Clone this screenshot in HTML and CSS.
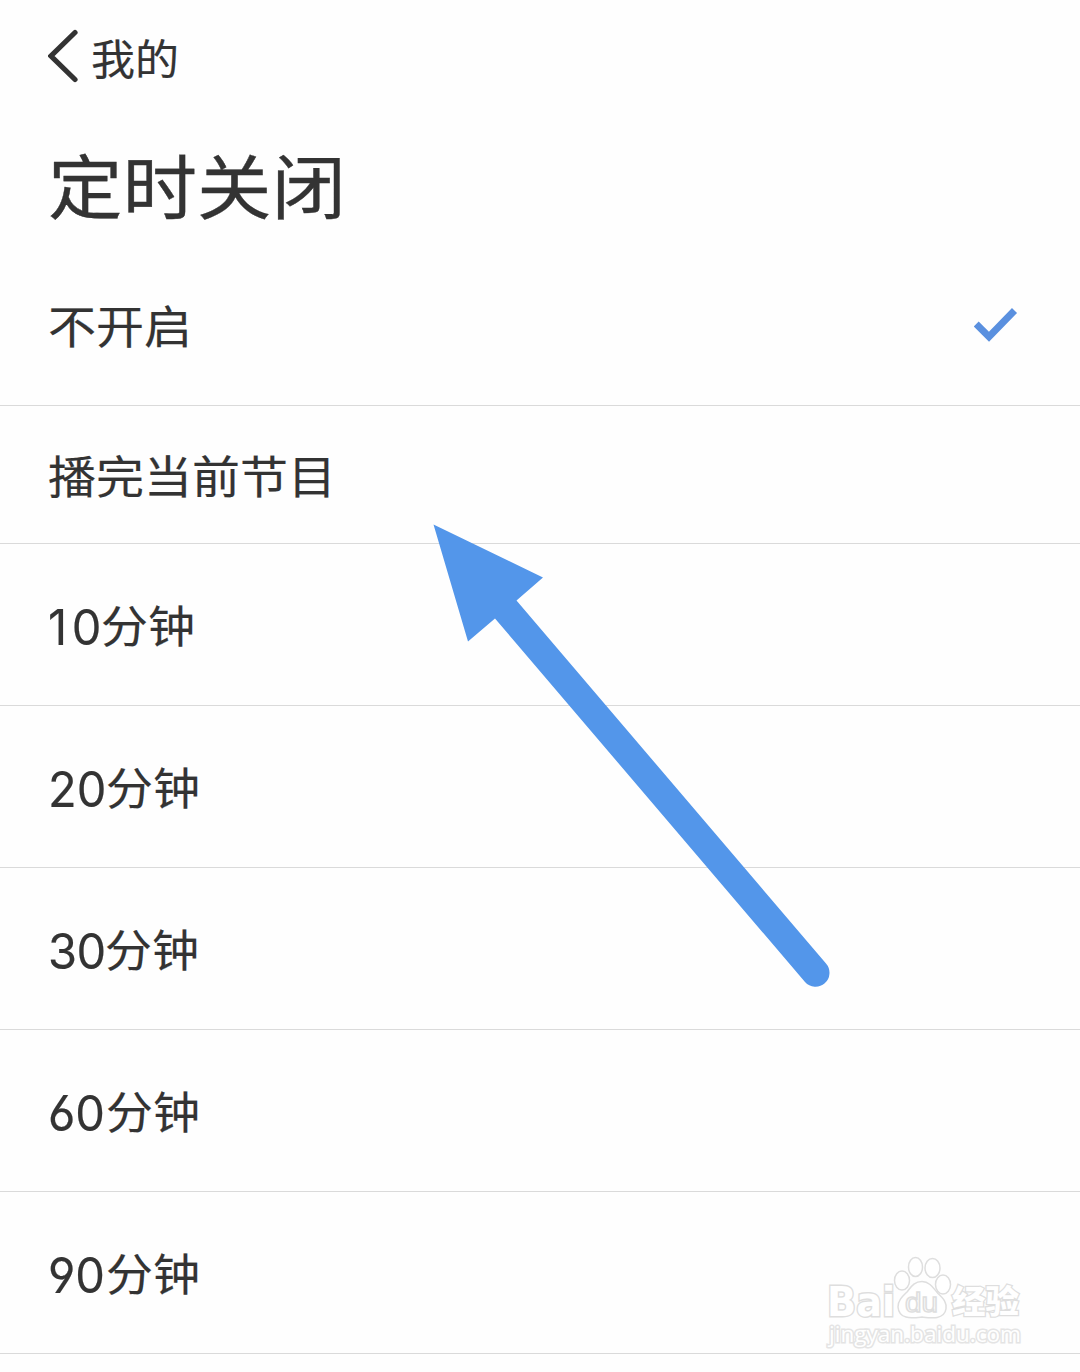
FILE: index.html
```html
<!DOCTYPE html>
<html lang="zh-CN">
<head>
<meta charset="utf-8">
<title>定时关闭</title>
<link rel="stylesheet" href="styles.css">
</head>
<body>
<main class="screen">
  <header class="header">
    <a class="back">
      <svg class="back-icon" width="30" height="54" viewBox="0 0 30 54"><path d="M27 3.500 3 27 27 50.500" fill="none" stroke="#333" stroke-width="5.200" stroke-linecap="round"/></svg>
      <span class="back-label">我的</span>
    </a>
    <h1 class="title">定时关闭</h1>
  </header>
  <ul class="options">
    <li class="option">
      <span class="label">不开启</span>
      <svg class="check" width="44" height="36" viewBox="0 0 44 36"><path d="M2.200 16 15 28.700 40.500 2.500" fill="none" stroke="#5a90df" stroke-width="7"/></svg>
    </li>
    <li class="option option-short"><span class="label">播完当前节目</span></li>
    <li class="option"><span class="label minutes"><span class="num num-ten">10</span>分钟</span></li>
    <li class="option"><span class="label minutes"><span class="num">20</span>分钟</span></li>
    <li class="option"><span class="label minutes"><span class="num num-thirty">30</span>分钟</span></li>
    <li class="option"><span class="label minutes"><span class="num">60</span>分钟</span></li>
    <li class="option"><span class="label minutes"><span class="num">90</span>分钟</span></li>
  </ul>
  <svg class="arrow" width="400" height="466" viewBox="432 523 400 466">
    <path d="M433.500 524.500 543 577.500 516.500 600.500 826 963.500A13.600 13.600 0 0 1 805 982L495 618.500 468 641.500Z" fill="#5396ea"/>
  </svg>
  <svg class="watermark" width="210" height="105" viewBox="820 1250 210 105">
    <g class="mark">
      <text class="brand" transform="translate(827 1316) scale(1.080 1)" x="0" y="0" textLength="63" lengthAdjust="spacingAndGlyphs">Bai</text>
      <ellipse cx="902" cy="1280.500" rx="7.500" ry="9.500"/>
      <ellipse cx="915.500" cy="1267" rx="7" ry="9.500"/>
      <ellipse cx="932.500" cy="1268" rx="7.500" ry="9.500"/>
      <ellipse cx="943" cy="1284.500" rx="7.500" ry="9.500"/>
      <path d="M922 1281.500C930 1281.500 934 1289 938 1293.500 944 1299 947 1303 946 1309 944 1320 931 1318 922 1317 912 1318 899 1320 898 1307 898 1300 903 1296 907 1292 911 1287 914 1281.500 922 1281.500Z"/>
      <text class="du" x="905" y="1312" textLength="33" lengthAdjust="spacingAndGlyphs">du</text>
      <text class="brand-cn" x="952" y="1313" textLength="67" lengthAdjust="spacingAndGlyphs">经验</text>
      <text class="site" x="829" y="1342" textLength="192" lengthAdjust="spacingAndGlyphs">jingyan.baidu.com</text>
    </g>
  </svg>
</main>
</body>
</html>
```
FILE: styles.css
```css
* { box-sizing: border-box; }
body {
  margin: 0;
  background: #fefefe;
  color: #333;
  font-family: "Noto Sans CJK SC", sans-serif;
}
.screen {
  position: relative;
  width: 1080px;
  height: 1372px;
  overflow: hidden;
}
.header {
  height: 244px;
  padding: 29px 48px 0;
}
.back {
  display: flex;
  align-items: center;
  gap: 13px;
  height: 54px;
}
.back-icon { display: block; }
.back-label {
  padding-top: 1px;
  font-size: 44px;
  line-height: 54px;
  transform: scaleY(.95);
  -webkit-text-stroke: .2px #333;
}
.title {
  margin: 54px 0 0;
  font-size: 74.500px;
  font-weight: 400;
  line-height: 94px;
  transform: scaleY(.94);
  -webkit-text-stroke: .4px #333;
}
.options {
  margin: 0;
  padding: 0;
  list-style: none;
}
.option {
  display: flex;
  align-items: center;
  justify-content: space-between;
  height: 162px;
  padding: 2px 62px 0 48px;
  border-bottom: 1px solid #dadada;
}
.option-short { height: 138px; }
.label {
  padding-bottom: 3px;
  font-size: 48px;
  line-height: 60px;
  white-space: nowrap;
  transform: scaleY(.94);
  -webkit-text-stroke: .2px #333;
}
.minutes {
  padding-bottom: 2px;
  font-size: 47px;
}
.num {
  display: inline-block;
  width: 58px;
  font-family: Inter, sans-serif;
  font-size: 50px;
  line-height: 60px;
  font-feature-settings: "cv03", "cv04";
  letter-spacing: 0;
  transform: translateY(1px) scale(.94, 1.06);
  transform-origin: left;
}
.num-ten { width: 53px; letter-spacing: 5px; }
.num-thirty { width: 57px; letter-spacing: -.5px; }
.arrow {
  position: absolute;
  left: 432px;
  top: 523px;
}
.watermark {
  position: absolute;
  left: 820px;
  top: 1250px;
}
.mark {
  fill: #fff;
  stroke: #dedede;
  stroke-width: 1.500px;
}
.brand {
  font: 700 41px "DejaVu Sans", sans-serif;
  paint-order: stroke;
  stroke-width: 3px;
}
.du {
  font: 400 27px "Liberation Sans", sans-serif;
}
.brand-cn {
  font: 900 32px "Noto Sans CJK SC", sans-serif;
  paint-order: stroke;
  stroke-width: 2.500px;
}
.site {
  font: 400 22px "Open Sans", sans-serif;
  paint-order: stroke;
  stroke-width: 3px;
  stroke: #e4e4e4;
}
```
